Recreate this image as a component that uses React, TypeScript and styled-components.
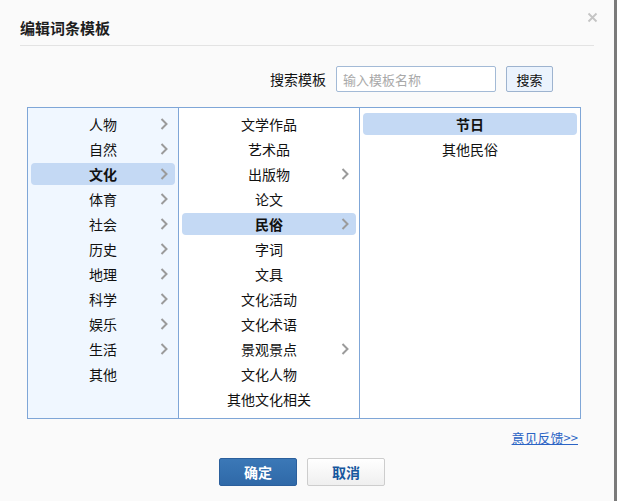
import React from "react";
import styled, { createGlobalStyle } from "styled-components";

const Global = createGlobalStyle`
  html, body { margin: 0; padding: 0; }
  body {
    background: #7a7a7a;
    font-family: "Noto Sans CJK SC", "Liberation Sans", sans-serif;
    width: 617px;
    height: 501px;
    overflow: hidden;
  }
`;

const Dialog = styled.div`
  position: relative;
  width: 614px;
  height: 501px;
  background: #fafafa;
  display: flex;
  flex-direction: column;
  box-sizing: border-box;
`;

const Header = styled.div`
  margin: 0 20px;
  border-bottom: 1px solid #e3e3e3;
  display: flex;
  align-items: center;
  padding-top: 11px;
  box-sizing: content-box;
  height: 34px;
`;

const Title = styled.h1`
  margin: 0;
  font-size: 15px;
  font-weight: bold;
  color: #1e1e1e;
  line-height: 20px;
`;

const Close = styled.button`
  position: absolute;
  top: 12px;
  left: 587px;
  width: 11px;
  height: 11px;
  padding: 0;
  border: 0;
  background: transparent;
  display: flex;
`;

const SearchRow = styled.div`
  margin-top: 20px;
  margin-right: 61px;
  display: flex;
  justify-content: flex-end;
  align-items: center;
  gap: 10px;
  height: 26px;
`;

const SearchLabel = styled.span`
  font-size: 14px;
  color: #111;
`;

const SearchInput = styled.input`
  width: 160px;
  height: 26px;
  box-sizing: border-box;
  border: 1px solid #a3bad6;
  border-radius: 2px;
  background: #fff;
  padding: 0 6px;
  font-size: 13px;
  font-family: inherit;
  outline: none;
  &::placeholder { color: #a9a9a9; }
`;

const SearchButton = styled.button`
  width: 47px;
  height: 26px;
  box-sizing: border-box;
  border: 1px solid #9db3cf;
  border-radius: 2px;
  background: #ebf3fd;
  font-family: inherit;
  font-size: 13px;
  color: #111;
  padding: 0;
`;

const Panel = styled.div`
  margin: 15px 0 0 27px;
  width: 554px;
  height: 312px;
  box-sizing: border-box;
  border: 1px solid #7fa6d7;
  display: grid;
  grid-template-columns: 151px 181px 220px;
`;

const Column = styled.div<{ $bg: string; $last?: boolean }>`
  background: ${(p) => p.$bg};
  border-right: ${(p) => (p.$last ? "none" : "1px solid #7fa6d7")};
  padding: 5px 3px 0;
  display: flex;
  flex-direction: column;
  gap: 3px;
`;

const Item = styled.div<{ $active?: boolean }>`
  height: 22px;
  border-radius: 4px;
  background: ${(p) => (p.$active ? "#c4d9f4" : "transparent")};
  display: grid;
  grid-template-columns: 1fr auto 1fr;
  align-items: center;
  font-size: 14px;
  font-weight: ${(p) => (p.$active ? "bold" : "normal")};
  color: #111;
  line-height: 22px;
`;

const Label = styled.span`
  grid-column: 2;
  white-space: nowrap;
`;

const ArrowWrap = styled.span`
  grid-column: 3;
  justify-self: end;
  margin-right: 7px;
  display: flex;
`;

const LinkRow = styled.div`
  margin-top: 11px;
  padding-right: 36px;
  display: flex;
  justify-content: flex-end;
  height: 16px;
`;

const Link = styled.a`
  font-size: 13px;
  line-height: 16px;
  color: #2b64c5;
  text-decoration: underline;
  cursor: pointer;
`;

const ButtonRow = styled.div`
  margin-top: 12px;
  padding-left: 219px;
  display: flex;
  gap: 10px;
`;

const Btn = styled.button<{ $primary?: boolean }>`
  width: 78px;
  height: 28px;
  box-sizing: border-box;
  border-radius: 2px;
  font-family: inherit;
  font-size: 14px;
  font-weight: bold;
  padding: 0;
  border: 1px solid ${(p) => (p.$primary ? "#2b5f9c" : "#cdcdcd")};
  background: ${(p) =>
    p.$primary
      ? "linear-gradient(#3b78b7, #2f69a8)"
      : "linear-gradient(#ffffff, #efefef)"};
  color: ${(p) => (p.$primary ? "#ffffff" : "#16579e")};
`;

const Arrow = () => (
  <svg width="8" height="12" viewBox="0 0 8 12">
    <polyline points="1.5,1 6.5,6 1.5,11" fill="none" stroke="#9b9b9b" strokeWidth="2" />
  </svg>
);

type Entry = { name: string; sub?: boolean; active?: boolean };

const col1: Entry[] = [
  { name: "人物", sub: true },
  { name: "自然", sub: true },
  { name: "文化", sub: true, active: true },
  { name: "体育", sub: true },
  { name: "社会", sub: true },
  { name: "历史", sub: true },
  { name: "地理", sub: true },
  { name: "科学", sub: true },
  { name: "娱乐", sub: true },
  { name: "生活", sub: true },
  { name: "其他" },
];

const col2: Entry[] = [
  { name: "文学作品" },
  { name: "艺术品" },
  { name: "出版物", sub: true },
  { name: "论文" },
  { name: "民俗", sub: true, active: true },
  { name: "字词" },
  { name: "文具" },
  { name: "文化活动" },
  { name: "文化术语" },
  { name: "景观景点", sub: true },
  { name: "文化人物" },
  { name: "其他文化相关" },
];

const col3: Entry[] = [{ name: "节日", active: true }, { name: "其他民俗" }];

const List = ({ items }: { items: Entry[] }) => (
  <>
    {items.map((it) => (
      <Item key={it.name} $active={it.active}>
        <Label>{it.name}</Label>
        {it.sub && (
          <ArrowWrap>
            <Arrow />
          </ArrowWrap>
        )}
      </Item>
    ))}
  </>
);

export default function App() {
  return (
    <>
      <Global />
      <Dialog>
        <Header>
          <Title>编辑词条模板</Title>
        </Header>
        <Close aria-label="关闭">
          <svg width="11" height="11" viewBox="0 0 11 11">
            <path d="M1.5 1.5 L9.5 9.5 M9.5 1.5 L1.5 9.5" stroke="#c4c4c4" strokeWidth="1.8" />
          </svg>
        </Close>
        <SearchRow>
          <SearchLabel>搜索模板</SearchLabel>
          <SearchInput placeholder="输入模板名称" />
          <SearchButton>搜索</SearchButton>
        </SearchRow>
        <Panel>
          <Column $bg="#f0f7ff">
            <List items={col1} />
          </Column>
          <Column $bg="#ffffff">
            <List items={col2} />
          </Column>
          <Column $bg="#ffffff" $last>
            <List items={col3} />
          </Column>
        </Panel>
        <LinkRow>
          <Link>意见反馈&gt;&gt;</Link>
        </LinkRow>
        <ButtonRow>
          <Btn $primary>确定</Btn>
          <Btn>取消</Btn>
        </ButtonRow>
      </Dialog>
    </>
  );
}
